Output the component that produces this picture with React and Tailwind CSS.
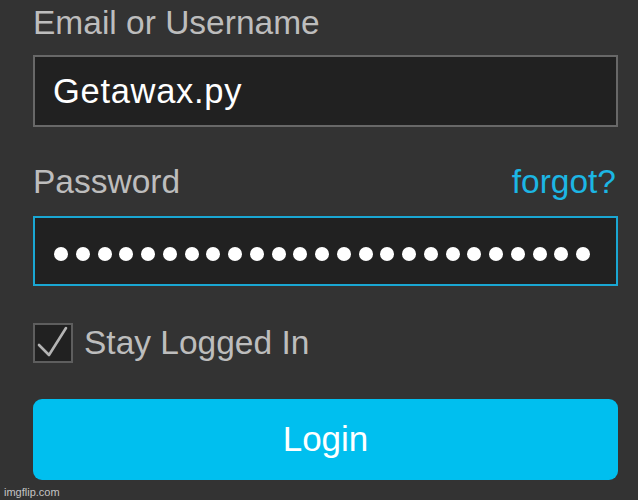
export default function App() {
  const dots = Array.from({ length: 25 });
  return (
    <div
      className="relative w-[638px] h-[500px] overflow-hidden bg-[#333333] pl-[33px] pr-[20px] pt-[3px]"
      style={{ fontFamily: '"Liberation Sans", Arial, sans-serif' }}
    >
      <div className="h-[40px] leading-[40px] text-[33.5px] text-[#bdbdbd]">Email or Username</div>
      <div className="mt-[12px] h-[72px] border-2 border-[#686868] bg-[#212121] pl-[18px] leading-[68px] text-[34.5px] tracking-[0.7px] text-white">
        Getawax.py
      </div>

      <div className="mt-[35px] flex h-[40px] items-center justify-between leading-[40px] text-[33.5px]">
        <span className="text-[#bdbdbd]">Password</span>
        <span className="mr-[2px] text-[#1cb6e4]">forgot?</span>
      </div>
      <div className="mt-[14px] flex h-[70px] items-center gap-[7.75px] border-2 border-[#1aa7d3] bg-[#212121] pl-[19px] pt-[6px]">
        {dots.map((_, i) => (
          <span key={i} className="block h-[14px] w-[14px] shrink-0 rounded-full bg-white" />
        ))}
      </div>

      <div className="mt-[37px] flex h-[40px] items-center">
        <div className="flex h-[40px] w-[40px] shrink-0 items-center justify-center border-2 border-[#5e5e5e] bg-[#212121]">
          <svg width="36" height="36" viewBox="0 0 36 36" fill="none">
            <path d="M4 20 L14 30 L31 3" stroke="#b4b4b4" strokeWidth="2.6" strokeLinecap="round" strokeLinejoin="round" />
          </svg>
        </div>
        <span className="ml-[11px] leading-[40px] text-[33.5px] text-[#bdbdbd]">Stay Logged In</span>
      </div>

      <button className="mt-[36px] flex h-[81px] w-full items-center justify-center rounded-[9px] bg-[#00bfef] text-[35px] text-white">
        Login
      </button>

      <div className="absolute bottom-[1px] left-[4px] text-[11px] leading-[14px] text-[#c4c4c4]">imgflip.com</div>
    </div>
  );
}
